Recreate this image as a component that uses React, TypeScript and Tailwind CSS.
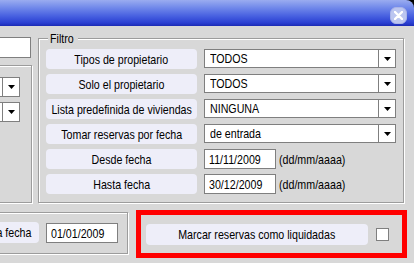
import React from "react";

function Arrow() {
  return (
    <svg width="7" height="4" viewBox="0 0 7 4">
      <polygon points="0,0 7,0 3.5,4" fill="#000" />
    </svg>
  );
}

function T({ children, origin = "origin-center" }: { children: React.ReactNode; origin?: string }) {
  return <span className={"inline-block shrink-0 whitespace-nowrap scale-x-[0.82] " + origin}>{children}</span>;
}

function Pill({ className, children }: { className: string; children?: React.ReactNode }) {
  return (
    <div
      className={
        "flex items-center whitespace-nowrap rounded-[4px] bg-[#eeeef9] text-[13px] leading-none text-black " +
        className
      }
    >
      {children}
    </div>
  );
}

function Combo({ value }: { value: string }) {
  return (
    <div className="flex h-[19px] w-[192px] border border-[#7f7f7f] bg-white">
      <div className="flex flex-1 items-center overflow-hidden pl-[5px] text-[13px] leading-none">
        <T origin="origin-left">{value}</T>
      </div>
      <div className="flex w-[17px] items-center justify-center border-l border-[#7f7f7f]">
        <Arrow />
      </div>
    </div>
  );
}

function SmallCombo() {
  return (
    <div className="flex h-[20px] w-[40px] border border-[#7f7f7f] bg-white">
      <div className="flex-1" />
      <div className="flex w-[17px] items-center justify-center border-l border-[#7f7f7f]">
        <Arrow />
      </div>
    </div>
  );
}

const etched =
  "border border-[#9c9c9c] shadow-[inset_1px_1px_0_#ffffff,1px_1px_0_#ffffff]";

export default function App() {
  const rows: [string, React.ReactNode][] = [
    ["Tipos de propietario", <Combo value="TODOS" />],
    ["Solo el propietario", <Combo value="TODOS" />],
    ["Lista predefinida de viviendas", <Combo value="NINGUNA" />],
    ["Tomar reservas por fecha", <Combo value="de entrada" />],
  ];
  const dates: [string, string][] = [
    ["Desde fecha", "11/11/2009"],
    ["Hasta fecha", "30/12/2009"],
  ];
  return (
    <div className="relative h-[263px] w-[414px] overflow-hidden bg-[#d8d8d8] font-['Liberation_Sans',Arial,sans-serif] text-black">
      {/* title bar */}
      <div className="bg-black">
        <div className="flex h-[26px] items-start justify-end rounded-tr-[8px] bg-[linear-gradient(to_bottom,#9aacf0_0%,#7088ea_30%,#4760e0_62%,#2a3fd2_88%,#1b2ab4_100%)] pr-[7px] pt-[7px]">
          <div className="flex h-[17px] w-[17px] items-center justify-center rounded-[6px] border border-[#aab4e8] bg-[#bcc6f0]">
            <svg width="9" height="9" viewBox="0 0 9 9">
              <path d="M1 1 L8 8 M8 1 L1 8" stroke="#ffffff" strokeWidth="2.4" strokeLinecap="round" />
            </svg>
          </div>
        </div>
      </div>

      {/* top section */}
      <div className="flex">
        <div className="flex w-[33px] shrink-0 flex-col">
          <div className="-ml-[10px] mt-[11px] h-[21px] w-[41px] border border-[#7f7f7f] bg-white" />
          <div className={"-ml-[10px] mt-[7px] flex h-[138px] w-[42px] flex-col items-end gap-[5px] pr-[11px] pt-[11px] " + etched}>
            <SmallCombo />
            <SmallCombo />
          </div>
        </div>

        <div className={"relative ml-[5px] mt-[12px] h-[165px] w-[366px] pl-[7px] pt-[10px] " + etched}>
          <div className="absolute left-[9px] top-[-8px] w-[30px] bg-[#d8d8d8] pl-[2px] text-[13px] leading-[15px]">
            <T origin="origin-left">Filtro</T>
          </div>
          <div className="flex flex-col gap-[5px]">
            {rows.map(([label, ctl]) => (
              <div key={label} className="flex gap-[7px]">
                <Pill className="h-[20px] w-[151px] shrink-0 justify-center">
                  <T>{label}</T>
                </Pill>
                {ctl}
              </div>
            ))}
            {dates.map(([label, v]) => (
              <div key={label} className="flex items-center gap-[7px]">
                <Pill className="h-[20px] w-[151px] shrink-0 justify-center">
                  <T>{label}</T>
                </Pill>
                <div className="flex h-[20px] w-[72px] shrink-0 items-center overflow-hidden border border-[#7f7f7f] bg-white pl-[4px] text-[13px] leading-none">
                  <T origin="origin-left">{v}</T>
                </div>
                <div className="-ml-[4px] text-[13px] leading-none">
                  <T origin="origin-left">(dd/mm/aaaa)</T>
                </div>
              </div>
            ))}
          </div>
        </div>
      </div>

      {/* bottom section */}
      <div className="mt-[7px] flex items-start">
        <div className={"-ml-[10px] mt-[2px] flex h-[42px] w-[138px] shrink-0 items-start gap-[7px] pt-[9px] " + etched}>
          <Pill className="h-[21px] w-[48px] shrink-0 justify-end pr-[8px]">
            <T origin="origin-right">Hasta fecha</T>
          </Pill>
          <div className="mt-[1px] flex h-[20px] w-[72px] shrink-0 items-center overflow-hidden border border-[#7f7f7f] bg-white pl-[4px] text-[13px] leading-none">
            <T origin="origin-left">01/01/2009</T>
          </div>
        </div>
        <div className="ml-[8px] flex h-[48px] w-[271px] shrink-0 items-center border-[5px] border-[#ff0000] pl-[5px]">
          <Pill className="h-[21px] w-[222px] shrink-0 justify-center">
            <T>Marcar reservas como liquidadas</T>
          </Pill>
          <div className="ml-[8px] h-[13px] w-[13px] border border-[#7f7f7f] bg-white" />
        </div>
      </div>
    </div>
  );
}
